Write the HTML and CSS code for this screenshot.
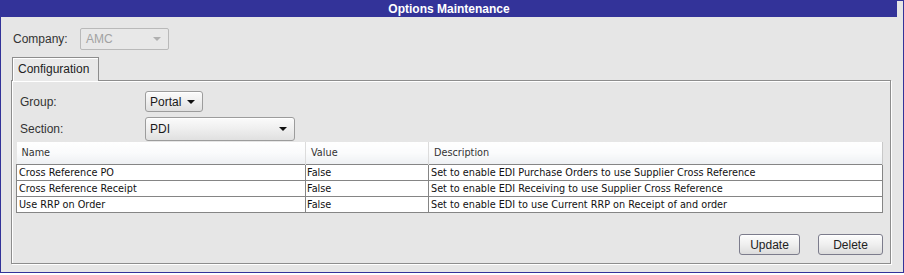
FILE: index.html
```html
<!DOCTYPE html>
<html lang="en">
<head>
  <meta charset="UTF-8"/>
  <title>Options Maintenance</title>
  <link rel="stylesheet" href="styles.css">
</head>
<body>

  <!-- MAIN WINDOW -->
  <div class="window">
    <div class="titlebar">Options Maintenance</div>

    <div class="content">
      <!-- COMPANY PICKER -->
      <div class="company-row">
        <span class="label company-label">Company:</span>
        <div class="combo combo-disabled company-combo">
          <span>AMC</span>
          <span class="arrow"></span>
        </div>
      </div>

      <!-- TABS -->
      <div class="tabs">
        <div class="tab">Configuration</div>
      </div>

      <div class="panel">
        <div class="field-row group-row">
          <span class="label field-label">Group:</span>
          <div class="combo group-combo">
            <span>Portal</span>
            <span class="arrow"></span>
          </div>
        </div>
        <div class="field-row section-row">
          <span class="label field-label">Section:</span>
          <div class="combo section-combo">
            <span>PDI</span>
            <span class="arrow"></span>
          </div>
        </div>

        <!-- OPTIONS GRID -->
        <table class="grid">
          <thead>
            <tr>
              <th class="col-name">Name</th>
              <th class="col-value">Value</th>
              <th class="col-desc">Description</th>
            </tr>
          </thead>
          <tbody>
            <tr>
              <td>Cross Reference PO</td>
              <td>False</td>
              <td>Set to enable EDI Purchase Orders to use Supplier Cross Reference</td>
            </tr>
            <tr>
              <td>Cross Reference Receipt</td>
              <td>False</td>
              <td>Set to enable EDI Receiving to use Supplier Cross Reference</td>
            </tr>
            <tr>
              <td>Use RRP on Order</td>
              <td>False</td>
              <td>Set to enable EDI to use Current RRP on Receipt of and order</td>
            </tr>
          </tbody>
        </table>

        <div class="actions">
          <button class="btn btn-update">Update</button>
          <button class="btn btn-delete">Delete</button>
        </div>
      </div>
    </div>
  </div>

</body>
</html>
```

FILE: styles.css
```css
/* GLOBAL STYLES */
* {
  margin: 0;
  padding: 0;
  box-sizing: border-box;
}
body {
  font-family: "Liberation Sans", Arial, sans-serif;
  font-size: 12px;
  color: #222;
  background: #fff;
}
/* WINDOW FRAME */
.window {
  width: 904px;
  height: 273px;
  border: 1px solid #333399;
  background: #e6e6e6;
}
.titlebar {
  height: 16px;
  margin-right: 6px;
  background: #333399;
  color: #fff;
  font-weight: bold;
  font-size: 12px;
  line-height: 16px;
  text-align: center;
}
.content {
  padding: 11px 12px 0 10px;
}
/* LABELS + COMBOS */
.label {
  color: #333;
  font-size: 12px;
}
.company-row {
  display: flex;
  align-items: center;
  height: 22px;
  padding-left: 2px;
}
.company-label {
  width: 67px;
}
.combo {
  display: flex;
  align-items: center;
  justify-content: space-between;
  border: 1px solid #9c9c9c;
  border-radius: 3px;
  background: linear-gradient(#fbfbfb, #f0f0f0 45%, #e0e0e0);
  box-shadow: inset 0 1px 0 #fff;
  padding: 0 7px 0 4px;
  font-size: 12px;
  color: #1a1a1a;
}
.arrow {
  width: 0;
  height: 0;
  border-left: 4px solid transparent;
  border-right: 4px solid transparent;
  border-top: 4px solid #111;
}
.combo-disabled {
  border-color: #b9b9b9;
  border-radius: 2px;
  background: #e8e8e8;
  box-shadow: none;
  color: #a2a2a2;
  padding-left: 5px;
}
.combo-disabled .arrow {
  border-top-color: #b0b0b0;
}
.company-combo {
  width: 89px;
  height: 22px;
}
/* TABS */
.tabs {
  display: flex;
  margin-top: 7px;
  padding-left: 1px;
}
.tab {
  position: relative;
  z-index: 1;
  width: 87px;
  height: 24px;
  margin-bottom: -1px;
  border: 1px solid #8d8d8d;
  border-bottom: none;
  background: #e9e9e9;
  box-shadow: inset 1px 1px 0 #fff;
  padding: 4px 0 0 5px;
  color: #222;
}
.panel {
  display: flex;
  flex-direction: column;
  width: 880px;
  height: 184px;
  border: 1px solid #8d8d8d;
  box-shadow: inset 1px 1px 0 #fff, 1px 1px 0 #fff;
  padding: 10px 4px 8px 4px;
}
.field-row {
  display: flex;
  align-items: center;
  padding-left: 4px;
}
.field-label {
  width: 125px;
}
.group-row {
  height: 21px;
  margin-bottom: 5px;
}
.group-combo {
  width: 58px;
  height: 21px;
}
.section-row {
  height: 24px;
  margin-bottom: 1px;
}
.section-combo {
  width: 150px;
  height: 24px;
}
/* OPTIONS GRID */
.grid {
  width: 867px;
  border-collapse: collapse;
  font-family: "DejaVu Sans", Tahoma, sans-serif;
  font-size: 9.7px;
  color: #111;
}
.grid th {
  height: 22px;
  padding-left: 5px;
  text-align: left;
  font-weight: normal;
  color: #333;
  background: linear-gradient(#ffffff, #fafbfc 50%, #eef0f3);
  border-right: 1px solid #dcdcdc;
}
.grid th:last-child {
  border-right: 1px solid #c8c8c8;
}
.col-name { width: 289px; }
.col-value { width: 123px; }
.grid td {
  height: 16px;
  padding: 0 2px;
  background: #fff;
  border: 1px solid #858585;
  white-space: nowrap;
}
.grid td:nth-child(2) {
  padding-left: 1px;
}
/* BUTTONS */
.actions {
  display: flex;
  justify-content: flex-end;
  gap: 18px;
  margin-top: auto;
  padding-right: 3px;
}
.btn {
  height: 21px;
  border: 1px solid #7c7c8c;
  border-radius: 3px;
  background: linear-gradient(#fdfdfd, #efefef 50%, #dcdcdc);
  box-shadow: inset 0 1px 0 #fff;
  font-family: "Liberation Sans", Arial, sans-serif;
  font-size: 12px;
  color: #222;
}
.btn-update { width: 61px; }
.btn-delete { width: 65px; }
```
